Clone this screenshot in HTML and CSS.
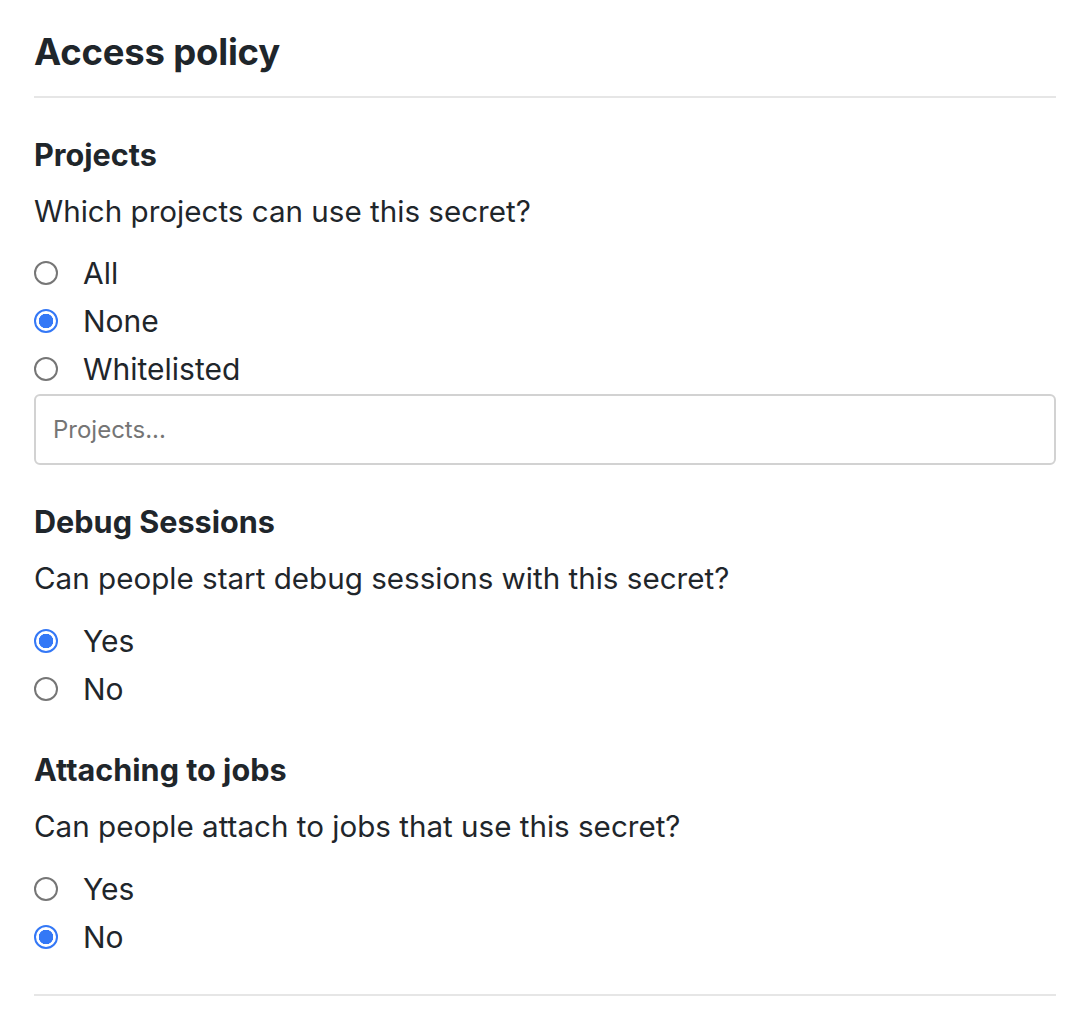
FILE: index.html
```html
<!DOCTYPE html>
<html lang="en">
<head>
<meta charset="utf-8">
<title>Access policy</title>
<link rel="stylesheet" href="styles.css">
</head>
<body>
<main class="page">
  <h1 class="title">Access policy</h1>
  <hr class="rule">

  <section class="section first">
    <h2 class="heading">Projects</h2>
    <p class="question">Which projects can use this secret?</p>
    <div class="options">
      <label class="option"><input type="radio" name="projects" class="radio"><span>All</span></label>
      <label class="option"><input type="radio" name="projects" class="radio" checked><span>None</span></label>
      <label class="option"><input type="radio" name="projects" class="radio"><span>Whitelisted</span></label>
    </div>
    <input type="text" class="text-input" placeholder="Projects...">
  </section>

  <section class="section">
    <h2 class="heading">Debug Sessions</h2>
    <p class="question">Can people start debug sessions with this secret?</p>
    <div class="options">
      <label class="option"><input type="radio" name="debug" class="radio" checked><span>Yes</span></label>
      <label class="option"><input type="radio" name="debug" class="radio"><span>No</span></label>
    </div>
  </section>

  <section class="section">
    <h2 class="heading">Attaching to jobs</h2>
    <p class="question">Can people attach to jobs that use this secret?</p>
    <div class="options">
      <label class="option"><input type="radio" name="attach" class="radio"><span>Yes</span></label>
      <label class="option"><input type="radio" name="attach" class="radio" checked><span>No</span></label>
    </div>
  </section>

  <hr class="rule bottom">
</main>
</body>
</html>
```
FILE: styles.css
```css
* { box-sizing: border-box; }
html, body { margin: 0; padding: 0; background: #fff; }
body {
  font-family: Inter, "Helvetica Neue", Arial, sans-serif;
  color: #1f262b;
}
.page {
  padding: 32px 24px 0 34px;
  display: flex;
  flex-direction: column;
}
.title {
  margin: 0;
  font-size: 36.5px;
  line-height: 40px;
  font-weight: 700;
  letter-spacing: -0.2px;
}
.rule {
  margin: 24px 0 0;
  border: 0;
  border-top: 2px solid #e6e6e6;
  height: 0;
}
.rule.bottom { margin-top: 33px; }
.section {
  margin-top: 37px;
  display: flex;
  flex-direction: column;
}
.heading {
  margin: 0;
  font-size: 30.6px;
  line-height: 40px;
  font-weight: 700;
}
.question {
  margin: 16px 0 0;
  font-size: 29.6px;
  line-height: 40px;
  font-weight: 400;
}
.options {
  margin-top: 19px;
  display: flex;
  flex-direction: column;
}
.first .options { margin-top: 18px; }
.option {
  height: 48px;
  display: flex;
  align-items: center;
  gap: 25px;
  font-size: 30px;
}
.radio {
  appearance: none;
  -webkit-appearance: none;
  margin: 0;
  width: 24px;
  height: 24px;
  border-radius: 50%;
  border: 2px solid #767676;
  background: #fff;
  flex: none;
}
.radio:checked {
  border-color: #3478f6;
  background: radial-gradient(circle, #3478f6 0 7px, #fff 7.5px);
}
.text-input {
  margin-top: 1px;
  height: 71px;
  width: 100%;
  border: 2px solid #d2d2d2;
  border-radius: 6px;
  padding: 0 17px;
  font-family: inherit;
  font-size: 24px;
  color: #1f262b;
}
.text-input::placeholder { color: #757575; }
```
